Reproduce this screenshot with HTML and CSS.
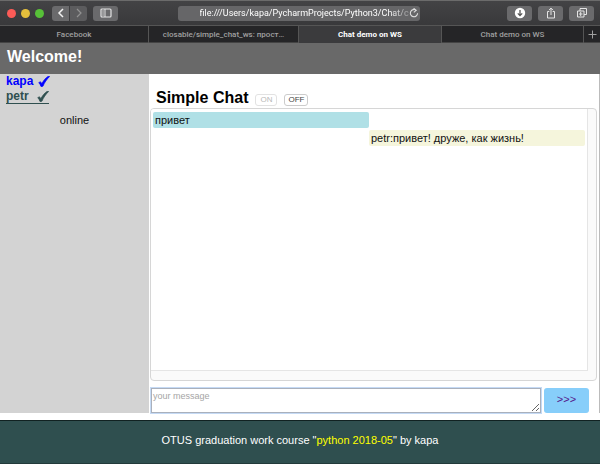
FILE: index.html
```html
<!DOCTYPE html>
<html lang="en">
<head>
<meta charset="utf-8">
<title>Chat demo on WS</title>
<link rel="stylesheet" href="styles.css">
</head>
<body>
<div class="toolbar">
  <div class="left">
    <div class="lights"><i class="red"></i><i class="yellow"></i><i class="green"></i></div>
    <div class="nav">
      <button class="tool back" aria-label="Back"><svg width="8" height="10" viewBox="0 0 8 10"><path d="M6 1 2 5l4 4" fill="none" stroke="#f2f2f2" stroke-width="1.5"/></svg></button>
      <button class="tool forward" aria-label="Forward"><svg width="8" height="10" viewBox="0 0 8 10"><path d="m2 1 4 4-4 4" fill="none" stroke="#929292" stroke-width="1.2"/></svg></button>
    </div>
    <button class="tool" aria-label="Sidebar"><svg width="12" height="10" viewBox="0 0 12 10"><rect x="1" y="1" width="10" height="8" rx="1" fill="none" stroke="#e4e4e4" stroke-width="1.2"/><path d="M5 1v8M2.300 3h1.500M2.300 5h1.500M2.300 7h1.500" stroke="#e4e4e4"/></svg></button>
  </div>
  <div class="address">
    <span class="url">file:///Users/kapa/PycharmProjects/Python3/Chat/c</span>
    <button class="reload" aria-label="Reload"><svg width="10" height="10" viewBox="0 0 10 10"><path d="M7.200 2.300A3.600 3.600 0 1 0 8.600 5.300M4.600 0.300l2.600 2-2.400 2" fill="none" stroke="#dedede" stroke-width="1.100"/></svg></button>
  </div>
  <div class="right">
    <button class="tool" aria-label="Downloads"><svg width="12" height="12" viewBox="0 0 12 12"><circle cx="6" cy="6" r="5.200" fill="#fff"/><path d="M6 3v5.500M3.800 6.400 6 8.600l2.200-2.200" fill="none" stroke="#555" stroke-width="1.300"/></svg></button>
    <button class="tool" aria-label="Share"><svg width="12" height="12" viewBox="0 0 12 12"><path d="M4.300 4.500H2.500v6.500h7V4.500H7.700M6 8V1.200M3.900 3.200 6 1.100l2.100 2.100" fill="none" stroke="#e4e4e4"/></svg></button>
    <button class="tool" aria-label="Show tabs"><svg width="12" height="12" viewBox="0 0 12 12"><path d="M4 4V1.500h6.500V7.500H8M1.500 4h6.500v6H1.500zM4.700 5v4M3 7h3.500" fill="none" stroke="#e4e4e4"/></svg></button>
  </div>
</div>
<nav class="tabs">
  <a href="#">Facebook</a>
  <a href="#">closable/simple_chat_ws: прост…</a>
  <a href="#" class="active">Chat demo on WS</a>
  <a href="#">Chat demo on WS</a>
  <button class="add" aria-label="New tab"><svg width="9" height="9" viewBox="0 0 9 9"><path d="M4.500 0.500v8M0.500 4.500h8" stroke="#a0a0a0"/></svg></button>
</nav>
<header class="welcome"><h1>Welcome!</h1></header>
<main class="main">
  <aside class="users">
    <a class="user self" href="#"><span>kapa</span> <svg width="12" height="11" viewBox="0 0 12 11"><path d="M.8 6.800C1.500 5.700 2.600 5.600 3.100 6.400L3.900 7.800C5.400 4.700 7.500 2.100 10.300.3L11.600.5C8.600 3.400 6.500 6.500 4.900 10.200L3 10.500C2.500 9.100 1.900 7.700.8 6.800Z" fill="currentColor" stroke="currentColor" stroke-width=".8" stroke-linejoin="round"/></svg></a>
    <a class="user other" href="#"><span>petr&nbsp;</span> <svg width="12" height="11" viewBox="0 0 12 11"><path d="M.8 6.800C1.500 5.700 2.600 5.600 3.100 6.400L3.900 7.800C5.400 4.700 7.500 2.100 10.300.3L11.600.5C8.600 3.400 6.500 6.500 4.900 10.200L3 10.500C2.500 9.100 1.900 7.700.8 6.800Z" fill="currentColor" stroke="currentColor" stroke-width=".8" stroke-linejoin="round"/></svg></a>
    <p class="status">online</p>
  </aside>
  <section class="chat">
    <div class="title">
      <h2>Simple Chat</h2>
      <button class="switch" disabled>ON</button>
      <button class="switch">OFF</button>
    </div>
    <div class="panel">
      <div class="messages">
        <p class="message mine">привет</p>
        <p class="message theirs">petr:привет! друже, как жизнь!</p>
      </div>
    </div>
    <form class="compose">
      <textarea aria-label="Message" placeholder="your message"></textarea>
      <button type="button" class="send">&gt;&gt;&gt;</button>
    </form>
  </section>
</main>
<footer class="footer"><p>OTUS graduation work course "<a href="#">python 2018-05</a>" by kapa</p></footer>
</body>
</html>
```
FILE: styles.css
```css
* { box-sizing: border-box; }
body {
  margin: 0;
  min-height: 100vh;
  display: flex;
  flex-direction: column;
  background: #fff;
  color: #111;
  font-family: "Liberation Sans", Arial, sans-serif;
  font-size: 11px;
}
h1, h2, p { margin: 0; }
button { font-family: inherit; padding: 0; border: 0; }
a { text-decoration: none; }
svg { display: block; }

.toolbar {
  height: 26px;
  flex: none;
  display: grid;
  grid-template-columns: 1fr 242px 1fr;
  align-items: center;
  padding: 0 6px 0 7px;
  background: linear-gradient(#434345, #39393b);
  border-top: 1px solid #6b6b6b;
  border-bottom: 1px solid #555;
}
.left, .right { display: flex; align-items: center; gap: 6px; }
.right { justify-content: flex-end; }
.lights { display: flex; gap: 5px; padding-right: 2px; }
.lights i { width: 9px; height: 9px; border-radius: 50%; }
.red { background: #fc5b57; }
.yellow { background: #e5bf3c; }
.green { background: #57c038; }
.nav { display: flex; gap: 1px; }
.tool {
  width: 25px;
  height: 15px;
  display: flex;
  align-items: center;
  justify-content: center;
  border-radius: 3px;
  background: #6a6a6c;
}
.back, .forward { width: 17px; }
.back { border-radius: 3px 0 0 3px; }
.forward { border-radius: 0 3px 3px 0; background: #5c5c5e; }
.address {
  height: 15px;
  display: flex;
  align-items: center;
  justify-content: space-between;
  margin: 0 2px 0 -2px;
  border-radius: 3px;
  background: #666668;
  padding: 0 4px 0 22px;
}
.url {
  white-space: nowrap;
  font: 400 9px/15px Roboto, sans-serif;
  color: #fff;
  mask-image: linear-gradient(90deg, #000 90%, rgba(0, 0, 0, .3));
}
.reload { background: none; }

.tabs {
  height: 17px;
  flex: none;
  display: grid;
  grid-template-columns: 149fr 150fr 143fr 142fr 16px;
  background: #252527;
  border-bottom: 1px solid #444;
  font: 500 8px/17px Roboto, sans-serif;
  text-align: center;
}
.tabs a { color: #a0a0a0; border-right: 1px solid #555; white-space: nowrap; }
.tabs .active { background: #3b3b3d; color: #fff; font-weight: 700; }
.add { background: none; display: flex; align-items: center; justify-content: center; }

.welcome { background: #696969; padding: 4px 7px 7px; }
.welcome h1 { color: #fff; font-size: 16px; line-height: 20px; }

.main {
  flex: 1;
  display: grid;
  grid-template-columns: 149px 1fr;
  margin-bottom: 7px;
}
.users { background: #d3d3d3; padding: 0 6px; }
.user {
  width: fit-content;
  display: flex;
  align-items: center;
  gap: 5px;
  font-size: 12px;
  font-weight: bold;
  line-height: 15px;
}
.self { color: #00f; }
.other { color: #2f4f4f; line-height: 14px; border-bottom: 1px solid #2f4f4f; }
.status { margin-top: 9px; line-height: 14px; text-align: center; }

.chat {
  display: flex;
  flex-direction: column;
  padding: 13px 2px 0 1px;
  border-right: 1px solid #bbb;
}
.title { display: flex; align-items: center; gap: 7px; padding-left: 6px; height: 21px; }
.title h2 { font-size: 16px; line-height: 20px; color: #000; }
.switch {
  width: 24px;
  height: 12px;
  margin-top: 4px;
  border: 1px solid #ccc;
  border-radius: 3px;
  background: #fff;
  color: #444;
  font-size: 8px;
  line-height: 10px;
}
.switch:disabled { width: 22px; border-color: #e2e2e2; color: #b8b8b8; }
.panel {
  flex: 1;
  display: flex;
  padding: 0 8px 9px 0;
  border: 1px solid #d6d6d6;
  border-radius: 4px;
  background: #fafafa;
}
.messages {
  flex: 1;
  padding: 3px 2px;
  border-right: 1px solid #e5e5e5;
  border-bottom: 1px solid #e5e5e5;
  border-radius: 3px 0 0 0;
  background: #fff;
}
.message {
  width: 50%;
  height: 16px;
  margin-bottom: 2px;
  padding: 0 2px;
  border-radius: 2px;
  line-height: 16px;
}
.mine { background: #b0e0e6; }
.theirs { margin-left: auto; background: #f5f5dc; }
.compose { display: flex; gap: 3px; margin-top: 7px; padding: 0 8px 0 1px; height: 25px; }
textarea {
  flex: 1;
  min-width: 0;
  padding: 1px 1px;
  border: 1px solid #a9b0bc;
  outline: 1px solid #c5daf5;
  border-radius: 0;
  font: 9px/12px "Liberation Sans", Arial, sans-serif;
}
textarea::placeholder { color: #a5a5a5; }
.send {
  width: 45px;
  padding-bottom: 4px;
  border-radius: 3px;
  background: #87cefa;
  color: #551a8b;
  font-size: 11px;
}
.footer {
  flex: none;
  height: 44px;
  padding-top: 12px;
  border-top: 1px solid #122;
  border-bottom: 1px solid #223a3a;
  background: #2f4f4f;
  color: #fff;
  text-align: center;
  line-height: 14px;
}
.footer a { color: #ff0; }
```
